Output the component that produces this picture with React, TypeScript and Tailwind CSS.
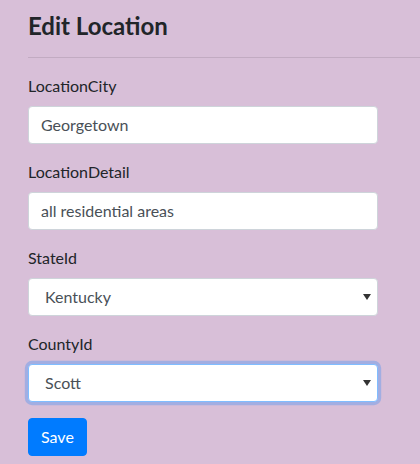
import { useState } from "react";

const FONT = "font-['Lato','Noto_Sans',sans-serif]";

function Field({ label, children }: { label: string; children: React.ReactNode }) {
  return (
    <div className="mb-4 flex flex-col">
      <label className="mb-2 text-[16px] leading-6 text-[#212529]">{label}</label>
      {children}
    </div>
  );
}

function SelectBox({
  value,
  options,
  focused,
}: {
  value: string;
  options: string[];
  focused?: boolean;
}) {
  const [current, setCurrent] = useState(value);
  return (
    <div className="relative">
      <select
        value={current}
        onChange={(e) => setCurrent(e.target.value)}
        className={
          focused
            ? "h-[38px] w-full appearance-none rounded border border-[#80bdff] bg-white pl-4 pr-8 text-[16px] text-[#495057] shadow-[0_0_0_3.2px_rgba(0,123,255,0.25)] outline-none"
            : "h-[38px] w-full appearance-none rounded border border-[#ced4da] bg-white pl-4 pr-8 text-[16px] text-[#495057] outline-none"
        }
      >
        {options.map((option) => (
          <option key={option}>{option}</option>
        ))}
      </select>
      <svg
        className="pointer-events-none absolute right-[7px] top-1/2 -translate-y-1/2"
        width="8"
        height="6"
        viewBox="0 0 8 6"
      >
        <path d="M0 0h8L4 6z" fill="#333" />
      </svg>
    </div>
  );
}

export default function App() {
  const [city, setCity] = useState("Georgetown");
  const [detail, setDetail] = useState("all residential areas");

  return (
    <div className={`min-h-[464px] w-[420px] overflow-hidden bg-[#d8bfd8] ${FONT}`}>
      <div className="pl-[28px] pt-3">
        <h4 className="mb-2 text-[24px] font-bold leading-[1.2] text-[#212529]">Edit Location</h4>
        <hr className="mt-4 mb-4 border-t border-[rgba(0,0,0,0.1)]" />
        <form className="w-[350px]" onSubmit={(e) => e.preventDefault()}>
          <Field label="LocationCity">
            <input
              value={city}
              onChange={(e) => setCity(e.target.value)}
              className="h-[38px] w-full rounded border border-[#ced4da] bg-white px-3 text-[16px] text-[#495057] outline-none"
            />
          </Field>
          <Field label="LocationDetail">
            <input
              value={detail}
              onChange={(e) => setDetail(e.target.value)}
              className="h-[38px] w-full rounded border border-[#ced4da] bg-white px-3 text-[16px] text-[#495057] outline-none"
            />
          </Field>
          <Field label="StateId">
            <SelectBox value="Kentucky" options={["Kentucky", "Ohio", "Tennessee"]} />
          </Field>
          <Field label="CountyId">
            <SelectBox value="Scott" options={["Fayette", "Scott", "Woodford"]} focused />
          </Field>
          <button
            type="submit"
            className="h-[38px] rounded border border-[#007bff] bg-[#007bff] px-3 text-[16px] text-white"
          >
            Save
          </button>
        </form>
      </div>
    </div>
  );
}
